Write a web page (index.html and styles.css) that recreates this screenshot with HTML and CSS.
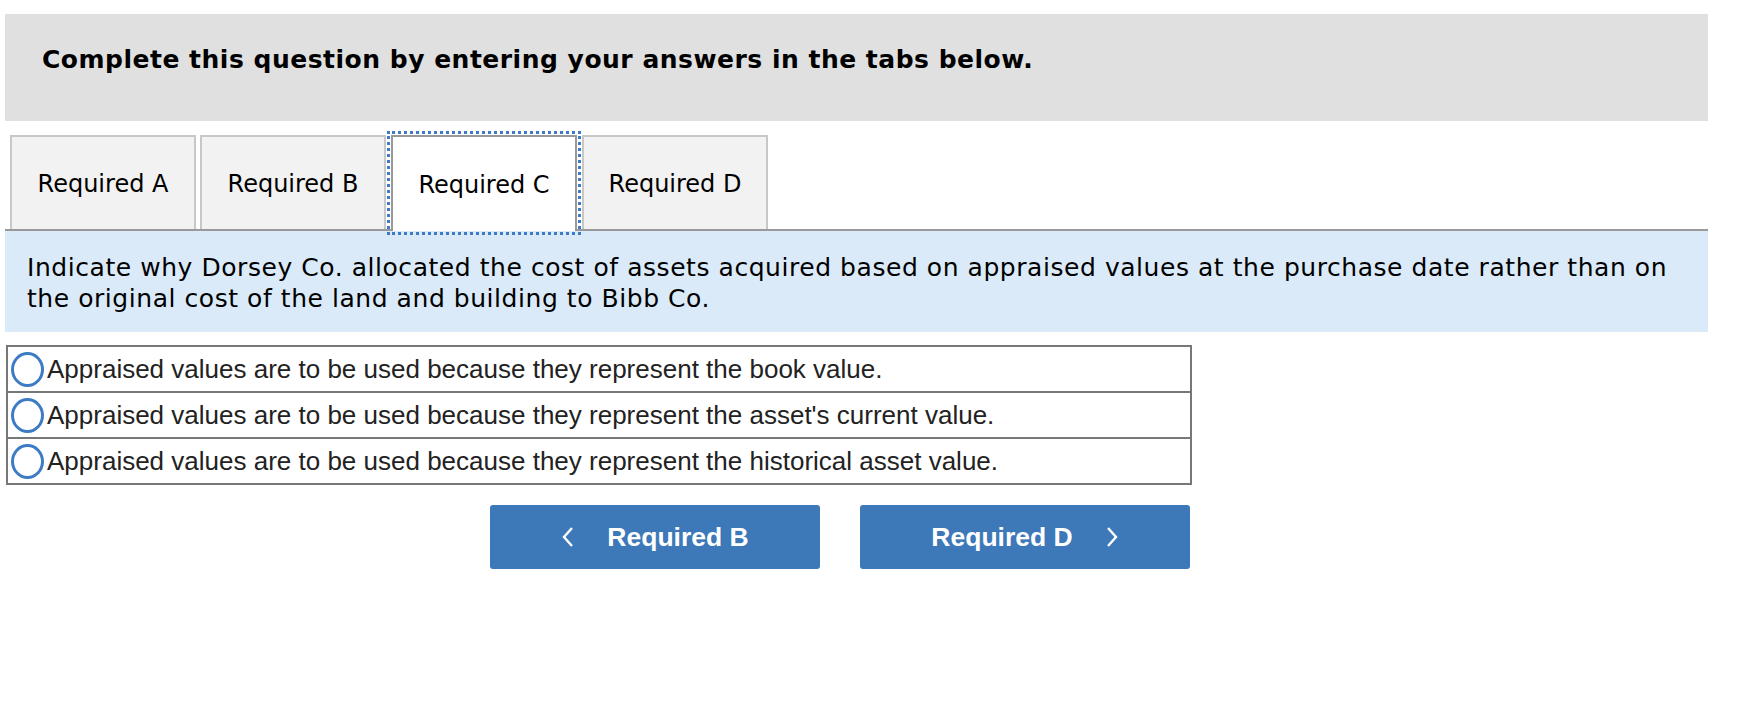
FILE: index.html
```html
<!DOCTYPE html>
<html>
<head>
<meta charset="utf-8">
<link rel="stylesheet" href="styles.css">
</head>
<body>
<div class="page">
  <div class="header">Complete this question by entering your answers in the tabs below.</div>
  <div class="tabs">
    <div class="tab">Required A</div>
    <div class="tab">Required B</div>
    <div class="tab active">Required C</div>
    <div class="tab">Required D</div>
  </div>
  <div class="prompt">Indicate why Dorsey Co. allocated the cost of assets acquired based on appraised values at the purchase date rather than on the original cost of the land and building to Bibb Co.</div>
  <div class="options">
    <div class="option"><span class="radio"></span><span class="label">Appraised values are to be used because they represent the book value.</span></div>
    <div class="option"><span class="radio"></span><span class="label">Appraised values are to be used because they represent the asset's current value.</span></div>
    <div class="option"><span class="radio"></span><span class="label">Appraised values are to be used because they represent the historical asset value.</span></div>
  </div>
  <div class="nav">
    <div class="btn"><svg class="chev" width="14" height="24" viewBox="0 0 14 24"><path d="M11 3 L3 12 L11 21" fill="none" stroke="#fff" stroke-width="2.4"/></svg><span>Required B</span></div>
    <div class="btn"><span>Required D</span><svg class="chev" width="14" height="24" viewBox="0 0 14 24"><path d="M3 3 L11 12 L3 21" fill="none" stroke="#fff" stroke-width="2.4"/></svg></div>
  </div>
</div>
</body>
</html>
```
FILE: styles.css
```css
html, body {
  margin: 0;
  padding: 0;
  background: #fff;
}
.page {
  padding: 14px 34px 0 5px;
  width: 1703px;
}
.header {
  background: #e0e0e0;
  height: 107px;
  box-sizing: border-box;
  padding: 31px 0 0 37px;
  font-family: "DejaVu Sans", Verdana, sans-serif;
  font-weight: bold;
  font-size: 25px;
  letter-spacing: 0.5px;
  color: #000;
}
.tabs {
  display: flex;
  margin-top: 14px;
  padding-left: 5px;
  border-bottom: 2px solid #999;
  height: 94px;
  align-items: flex-end;
}
.tab {
  width: 186px;
  height: 94px;
  box-sizing: border-box;
  background: #f2f2f2;
  border: 2px solid #c8c8c8;
  border-bottom: none;
  margin-right: 4px;
  display: flex;
  align-items: center;
  justify-content: center;
  font-family: "DejaVu Sans", Verdana, sans-serif;
  font-size: 24px;
  color: #000;
  padding-top: 2px;
}
.tab.active {
  background: #fff;
  border-color: #999;
  outline: 3px dotted #3d7cc4;
  outline-offset: 1px;
  margin-right: 5px;
  margin-left: 1px;
  position: relative;
  z-index: 1;
  height: 96px;
  margin-bottom: -2px;
}
.prompt {
  background: #daeaf8;
  padding: 21px 22px 18px 22px;
  font-family: "DejaVu Sans", Verdana, sans-serif;
  font-size: 25px;
  letter-spacing: 0.55px;
  line-height: 31px;
  color: #000;
}
.options {
  margin-top: 13px;
  margin-left: 1px;
  width: 1186px;
  border: 2px solid #777;
  box-sizing: border-box;
}
.option {
  display: flex;
  align-items: center;
  height: 44px;
  border-top: 2px solid #777;
  font-family: "Liberation Sans", Arial, sans-serif;
  font-size: 26px;
  color: #222;
}
.option:first-child {
  border-top: none;
}
.radio {
  width: 27px;
  height: 29px;
  border: 3.5px solid #3d7cc4;
  border-radius: 50%;
  margin-left: 3px;
  margin-right: 3px;
  flex: none;
}
.nav {
  display: flex;
  gap: 40px;
  margin-top: 20px;
  padding-left: 485px;
}
.btn {
  width: 330px;
  height: 64px;
  background: #3d78b8;
  border-radius: 3px;
  display: flex;
  align-items: center;
  justify-content: center;
  gap: 32px;
  color: #fff;
  font-family: "Liberation Sans", Arial, sans-serif;
  font-weight: bold;
  font-size: 26.5px;
}
.chev {
  display: block;
}
```
